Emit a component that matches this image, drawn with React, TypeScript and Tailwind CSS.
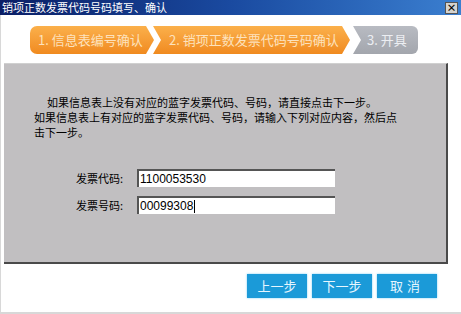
import React from "react";

const font = { fontFamily: "SimSun, 'Noto Sans CJK SC', sans-serif" };

export default function App() {
  return (
    <div
      className="relative h-[314px] w-[461px] overflow-hidden bg-white text-[12px] text-black"
      style={font}
    >
      {/* Title bar */}
      <div className="flex h-[15px] items-center justify-between bg-gradient-to-r from-[#0b1f66] via-[#1a4aa0] to-[#3b7fd0] pl-[2px] pr-[3px]">
        <span className="text-[11px] leading-none text-white">销项正数发票代码号码填写、确认</span>
        <div className="flex h-[12px] w-[13px] items-center justify-center border border-[#555] bg-[#d6d3ce] text-[10px] font-bold leading-none text-black">
          ×
        </div>
      </div>

      {/* Body frame */}
      <div className="flex h-[299px] flex-col border-b-2 border-l border-[#d8d8d8]">
        {/* Steps */}
        <div className="ml-[29px] mt-[11px] flex h-[28px] items-stretch">
          <div className="flex w-[124px] items-center rounded-l-[7px] bg-gradient-to-b from-[#fbb04a] to-[#f08a1e] pl-[8px] text-[13px] text-[#fde2bd] [clip-path:polygon(0_0,116px_0,124px_50%,116px_100%,0_100%)]">
            1. 信息表编号确认
          </div>
          <div className="-ml-[1px] flex w-[197px] items-center bg-gradient-to-b from-[#fbb04a] to-[#f08a1e] pl-[16px] text-[13px] text-[#fde2bd] [clip-path:polygon(0_0,189px_0,197px_50%,189px_100%,0_100%,8px_50%)]">
            2. 销项正数发票代码号码确认
          </div>
          <div className="ml-[3px] flex w-[65px] items-center rounded-r-[6px] bg-gradient-to-b from-[#b8bbc2] to-[#a3a6ad] pl-[14px] text-[13px] text-[#eceef2] [clip-path:polygon(0_0,100%_0,100%_100%,0_100%,8px_50%)]">
            3. 开具
          </div>
        </div>

        {/* Gray panel */}
        <div className="ml-[3px] mt-[9px] flex h-[201px] w-[444px] flex-col border-b-2 border-r-2 border-t border-[#4a4a4a] border-t-[#d0d0d0] bg-[#c1bfc1]">
          <div className="ml-[30px] mt-[31px] w-[372px] text-[11px] leading-[15px]">
            <p className="pl-[13px]">如果信息表上没有对应的蓝字发票代码、号码，请直接点击下一步。</p>
            <p>如果信息表上有对应的蓝字发票代码、号码，请输入下列对应内容，然后点击下一步。</p>
          </div>

          <div className="ml-[72px] mt-[29px] flex flex-col gap-[9px]">
            <div className="flex items-center">
              <span className="w-[61px] text-[11px]">发票代码:</span>
              <div className="flex h-[18px] w-[198px] items-center border-l-2 border-t-2 border-[#555] bg-white pl-[1px] text-[12px]" style={{ fontFamily: "'Liberation Sans', Arial, sans-serif" }}>
                1100053530
              </div>
            </div>
            <div className="flex items-center">
              <span className="w-[61px] text-[11px]">发票号码:</span>
              <div className="flex h-[18px] w-[198px] items-center border-l-2 border-t-2 border-[#555] bg-white pl-[1px] text-[12px]" style={{ fontFamily: "'Liberation Sans', Arial, sans-serif" }}>
                00099308<span className="ml-[1px] h-[13px] w-px bg-black" />
              </div>
            </div>
          </div>
        </div>

        {/* Buttons */}
        <div className="mr-[24px] mt-[10px] flex justify-end gap-[5px]">
          <button className="h-[24px] w-[60px] bg-[#1b9ad8] text-[13px] text-[#e6f6ff] shadow-[0_0_2px_#7fd0f5]">上一步</button>
          <button className="h-[24px] w-[60px] bg-[#1b9ad8] text-[13px] text-[#e6f6ff] shadow-[0_0_2px_#7fd0f5]">下一步</button>
          <button className="h-[24px] w-[60px] bg-[#1b9ad8] text-[13px] tracking-[4px] text-[#e6f6ff] shadow-[0_0_2px_#7fd0f5]">取消</button>
        </div>
      </div>
    </div>
  );
}
